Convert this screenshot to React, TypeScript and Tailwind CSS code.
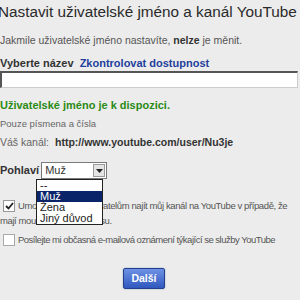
import React from "react";

export default function App() {
  return (
    <div
      className="w-[300px] h-[300px] overflow-hidden bg-[#ececec] text-[#444] relative"
      style={{ fontFamily: '"Liberation Sans", Arial, sans-serif' }}
    >
      <div className="pl-0 pr-[2px]">
        <h1 className="ml-[-2px] mt-[2px] text-[15.3px] leading-[20px] text-[#2a2a2a] whitespace-nowrap">
          Nastavit uživatelské jméno a kanál YouTube
        </h1>
        <p className="mt-[12px] text-[10.5px] leading-[13px] text-[#555] whitespace-nowrap">
          Jakmile uživatelské jméno nastavíte, <b className="text-[#333]">nelze</b> je měnit.
        </p>
        <div className="mt-[10px] text-[11px] leading-[13px] whitespace-nowrap">
          <b className="text-[#333]">Vyberte název</b>{" "}
          <b className="text-[#1f3f9c] ml-[3px]">Zkontrolovat dostupnost</b>
        </div>
        <div className="mt-[1px] h-[17px] w-[298px] bg-white border-t-2 border-l-2 border-[#555] border-r border-b border-r-[#ccc] border-b-[#ccc]"></div>
        <div className="mt-[11px] text-[11px] leading-[13px] font-bold text-[#2a8a16] whitespace-nowrap">
          Uživatelské jméno je k dispozici.
        </div>
        <div className="mt-[6px] text-[9.5px] leading-[12px] text-[#666] whitespace-nowrap">
          Pouze písmena a čísla
        </div>
        <div className="mt-[6px] text-[10.5px] leading-[13px] text-[#666] whitespace-nowrap flex">
          <span>Váš kanál:</span>
          <b className="ml-[6px] text-[#333]">http://www.youtube.com/user/Nu3je</b>
        </div>
        <div className="mt-[13px] flex items-center h-[17px] relative">
          <b className="text-[11px] text-[#333] mr-[2px]">Pohlaví</b>
          <div className="w-[66px] h-[17px] bg-white border border-[#7a7a7a] flex items-center justify-between">
            <span className="text-[11px] text-[#333] pl-[3px]">Muž</span>
            <div className="w-[12px] h-[13px] mr-[1px] bg-[#e4e4e4] border border-[#9a9a9a] flex items-center justify-center">
              <svg width="7" height="4" viewBox="0 0 7 4">
                <path d="M0 0 L7 0 L3.5 4 Z" fill="#222" />
              </svg>
            </div>
          </div>
          <div className="absolute left-[36px] top-[17px] w-[67px] bg-white border border-[#222] z-10 text-[11px] leading-[11px] text-[#222]">
            <div className="h-[11px] pl-[3px]">--</div>
            <div className="h-[11px] pl-[3px] bg-[#0a246a] text-white">Muž</div>
            <div className="h-[11px] pl-[3px]">Žena</div>
            <div className="h-[11px] pl-[3px]">Jiný důvod</div>
          </div>
        </div>
        <div className="mt-[21px] flex items-start">
          <div className="ml-[3px] mt-[0px] w-[12px] h-[12px] bg-white border border-[#999] flex items-center justify-center shrink-0">
            <svg width="9" height="8" viewBox="0 0 9 8">
              <path d="M1 4 L3.5 6.5 L8 1" stroke="#222" strokeWidth="1.8" fill="none" />
            </svg>
          </div>
          <div className="ml-[3px] text-[9.5px] leading-[12px] tracking-[-0.4px] text-[#555] whitespace-nowrap">
            Umožnit ostatním uživatelům najít můj kanál na YouTube v případě, že
          </div>
        </div>
        <div className="mt-[3px] text-[9.5px] leading-[12px] tracking-[-0.4px] text-[#555] whitespace-nowrap">
          mají mou e-mailovou adresu.
        </div>
        <div className="mt-[7px] flex items-center">
          <div className="ml-[3px] w-[12px] h-[12px] bg-white border border-[#aaa] shrink-0"></div>
          <div className="ml-[3px] text-[9.5px] leading-[12px] tracking-[-0.5px] text-[#555] whitespace-nowrap">
            Posílejte mi občasná e-mailová oznámení týkající se služby YouTube
          </div>
        </div>
        <div className="mt-[22px] flex justify-center pr-[10px]">
          <button className="w-[42px] h-[21px] rounded-[2px] border border-[#223f8e] bg-gradient-to-b from-[#6f92e6] to-[#2f57bd] text-white text-[10.5px] font-bold shadow-[0_0_2px_#9ab]">
            Další
          </button>
        </div>
      </div>
    </div>
  );
}
